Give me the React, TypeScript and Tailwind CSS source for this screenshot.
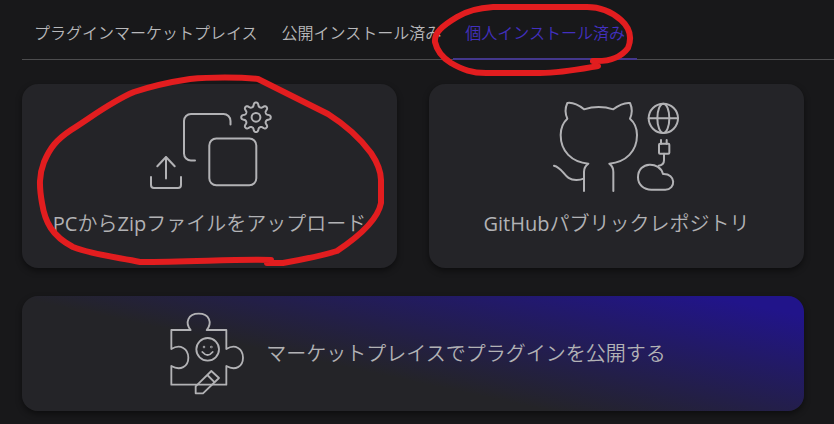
import { useState } from "react";

const tabs = ["プラグインマーケットプレイス", "公開インストール済み", "個人インストール済み"];

function gearPath(cx: number, cy: number) {
  const points: string[] = [];
  for (let i = 0; i < 192; i++) {
    const angle = (i / 192) * Math.PI * 2;
    const radius = 12.8 + 2.2 * Math.tanh(1.6 * Math.cos(8 * angle) - 0.2);
    points.push(`${(cx + radius * Math.sin(angle)).toFixed(2)} ${(cy - radius * Math.cos(angle)).toFixed(2)}`);
  }
  return `M${points.join("L")}Z`;
}

const stroke = {
  fill: "none",
  stroke: "currentColor",
  strokeLinecap: "round",
  strokeLinejoin: "round",
} as const;

function UploadArt() {
  return (
    <svg aria-hidden="true" className="h-[92px] w-[127px]" viewBox="146 100 127 92" strokeWidth="2" {...stroke}>
      <path d={gearPath(256, 117.3)} />
      <circle cx="256" cy="117.3" r="4.4" />
      <path d="M230.5 124.5V121a7 7 0 0 0-7-7H191a7 7 0 0 0-7 7v32.500a7 7 0 0 0 7 7h4" />
      <rect x="209.300" y="138.500" width="47" height="46.800" rx="7" />
      <path d="M166 178.500V157M157.300 166.300l8.700-9.300 8.700 9.300M151 177v8a3 3 0 0 0 3 3h24a3 3 0 0 0 3-3v-8" />
    </svg>
  );
}

function GitHubArt() {
  return (
    <svg aria-hidden="true" className="h-[92px] w-[127px]" viewBox="39 30 381 276" strokeWidth="6" {...stroke}>
      <path d="M132 303V246C132 236 137 227 145 221C95 216 62 184 62 135C62 112 70 97 82 86C75 70 76 52 82 39C102 36 118 47 132 58C160 49 192 49 220 58C234 47 250 37 270 39C276 52 277 70 270 86C283 97 291 112 291 135C291 184 258 216 208 221C216 227 220 236 220 246V303" />
      <path d="M42 227C72 234 72 271 110 270Q122 270 131 266" />
      <circle cx="370" cy="85" r="44" />
      <ellipse cx="370" cy="85" rx="18" ry="44" />
      <path d="M326 85H414" />
      <path d="M363 150V161M380 150V161" />
      <rect x="357" y="161" width="31" height="30" rx="3" />
      <path d="M372 191V211Q372 226 356 227" />
      <path d="M369 252C360 214 294 212 294 262C294 284 311 299 334 299H376C408 299 409 250 369 252Z" />
    </svg>
  );
}

function PuzzleArt() {
  return (
    <svg aria-hidden="true" className="h-[83px] w-[90px] shrink-0" viewBox="30 36 270 249" strokeWidth="5.500" {...stroke}>
      <path d="M64 90H122C104 68 114 41 146 41C178 41 188 68 170 90H229V147C256 130 279 147 279 173C279 199 256 214 229 198V254H64V198C91 214 115 199 115 173C115 147 91 130 64 147Z" />
      <circle cx="173" cy="148" r="34" />
      <path d="M157 156Q173 174 188 156" />
      <circle cx="162" cy="141" r="1" />
      <circle cx="184" cy="141" r="1" />
      <path d="M137 280V259L184 213L207 234L159 280ZM172 225L194 247" />
    </svg>
  );
}

function PenMarks() {
  return (
    <svg
      aria-hidden="true"
      className="pointer-events-none absolute top-0 left-0 h-[280px] w-[660px] text-[#e21d1f]"
      viewBox="0 0 660 280"
      strokeWidth="6"
      {...stroke}
    >
      <path d="M593 61C611 62 622 56 628 48C632 38 630 28 621 20C613 13 602 7 587 7H493C478 8 465 12 457 17C442 26 434 33 435 42C437 51 443 58 451 63C463 70 472 73 486 73H540C562 73 581 69 598 66" />
      <path d="M271 260C240 259 190 262 140 262C115 257 90 254 73 247C52 236 45 222 42 203C39 186 39 175 44 162C50 148 56 140 71 130C93 116 112 101 134 92C152 86 170 82 190 79C210 77 240 77 258 79L328 114C347 126 360 138 371 153C377 162 381 170 381 180V203C378 219 361 235 337 251C317 257 300 260 283 263H267" />
    </svg>
  );
}

export default function App() {
  const [active, setActive] = useState(2);
  const card =
    "flex cursor-pointer items-center rounded-2xl text-xl text-[#b2b2b5] shadow-[0_3px_6px_rgba(0,0,0,0.45)]";

  return (
    <main className="relative min-h-screen bg-[#18181a] pt-2 pb-3 pl-[22px] font-['Open_Sans','Noto_Sans_CJK_JP',sans-serif] font-[350]">
      <div role="tablist" className="flex border-b border-[#4c4c4e] text-base text-[#b8b8bb]">
        {tabs.map((tab, i) => (
          <button
            key={tab}
            type="button"
            role="tab"
            aria-selected={active === i}
            onClick={() => setActive(i)}
            className={`-mb-px h-[52px] cursor-pointer border-b-2 px-3 whitespace-nowrap ${
              active === i ? "border-[#43378c] text-[#4330c0]" : "border-transparent"
            }`}
          >
            {tab}
          </button>
        ))}
      </div>
      <div className="mt-6 mr-[30px] grid grid-cols-2 gap-x-8 gap-y-7">
        <button type="button" className={`${card} flex-col bg-[#242428] pt-4 pb-[30px]`}>
          <UploadArt />
          <span className="mt-[18px]">
            <span className="font-normal">PC</span>から<span className="font-normal">Zip</span>ファイルをアップロード
          </span>
        </button>
        <button type="button" className={`${card} flex-col bg-[#242428] pt-4 pb-[30px]`}>
          <GitHubArt />
          <span className="mt-[18px]">
            <span className="font-normal">GitHub</span>パブリックレポジトリ
          </span>
        </button>
        <button
          type="button"
          className={`${card} col-span-2 justify-center gap-4 bg-[linear-gradient(12deg,#242428_40%,#21148a_93%)] py-4`}
        >
          <PuzzleArt />
          <span>マーケットプレイスでプラグインを公開する</span>
        </button>
      </div>
      <PenMarks />
    </main>
  );
}
